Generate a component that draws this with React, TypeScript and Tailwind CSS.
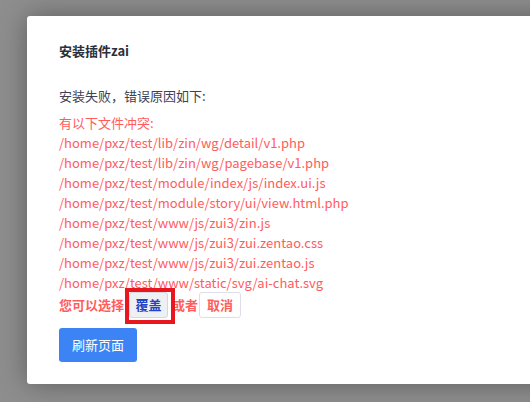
export default function App() {
  const files = [
    "/home/pxz/test/lib/zin/wg/detail/v1.php",
    "/home/pxz/test/lib/zin/wg/pagebase/v1.php",
    "/home/pxz/test/module/index/js/index.ui.js",
    "/home/pxz/test/module/story/ui/view.html.php",
    "/home/pxz/test/www/js/zui3/zin.js",
    "/home/pxz/test/www/js/zui3/zui.zentao.css",
    "/home/pxz/test/www/js/zui3/zui.zentao.js",
    "/home/pxz/test/www/static/svg/ai-chat.svg",
  ];

  return (
    <div className="w-[530px] h-[402px] overflow-hidden bg-[#8e8e8e] pt-4 pl-[27px] font-['Noto_Sans_CJK_SC','Noto_Sans',sans-serif] text-[13px] leading-5">
      {/* modal */}
      <div className="w-[540px] h-[368px] bg-white rounded-[3px] shadow-[0_0_28px_rgba(0,0,0,0.35)] pt-[25px] pl-8">
        <div className="font-bold text-[#2a2f3b]">安装插件zai</div>

        <div className="mt-[25px] text-[#3c4353]">安装失败，错误原因如下:</div>

        <div className="mt-[7px] text-[#ff5c5c]">
          <div>有以下文件冲突:</div>
          {files.map((f) => (
            <div key={f}>{f}</div>
          ))}
        </div>

        <div className="-mt-px flex h-[26px] items-center font-bold text-[#ff5c5c]">
          <span>您可以选择</span>
          <div className="relative ml-[5px]">
            <button className="h-[26px] w-[39px] rounded-[3px] border border-[#d4d7de] bg-[#eef0f3] text-[#1f45c4]">
              覆盖
            </button>
            {/* highlight box */}
            <div className="absolute -left-[4px] -top-[4px] h-[36px] w-[50px] border-4 border-[#e8161f]" />
          </div>
          <span className="ml-[4px]">或者</span>
          <button className="ml-[1px] h-[26px] w-[42px] rounded-[3px] border border-[#dcdfe8] bg-white text-[#ff5c5c]">
            取消
          </button>
        </div>

        <button className="mt-[10px] h-[34px] w-[78px] rounded-[3px] bg-[#3c84f6] text-white">
          刷新页面
        </button>
      </div>
    </div>
  );
}
